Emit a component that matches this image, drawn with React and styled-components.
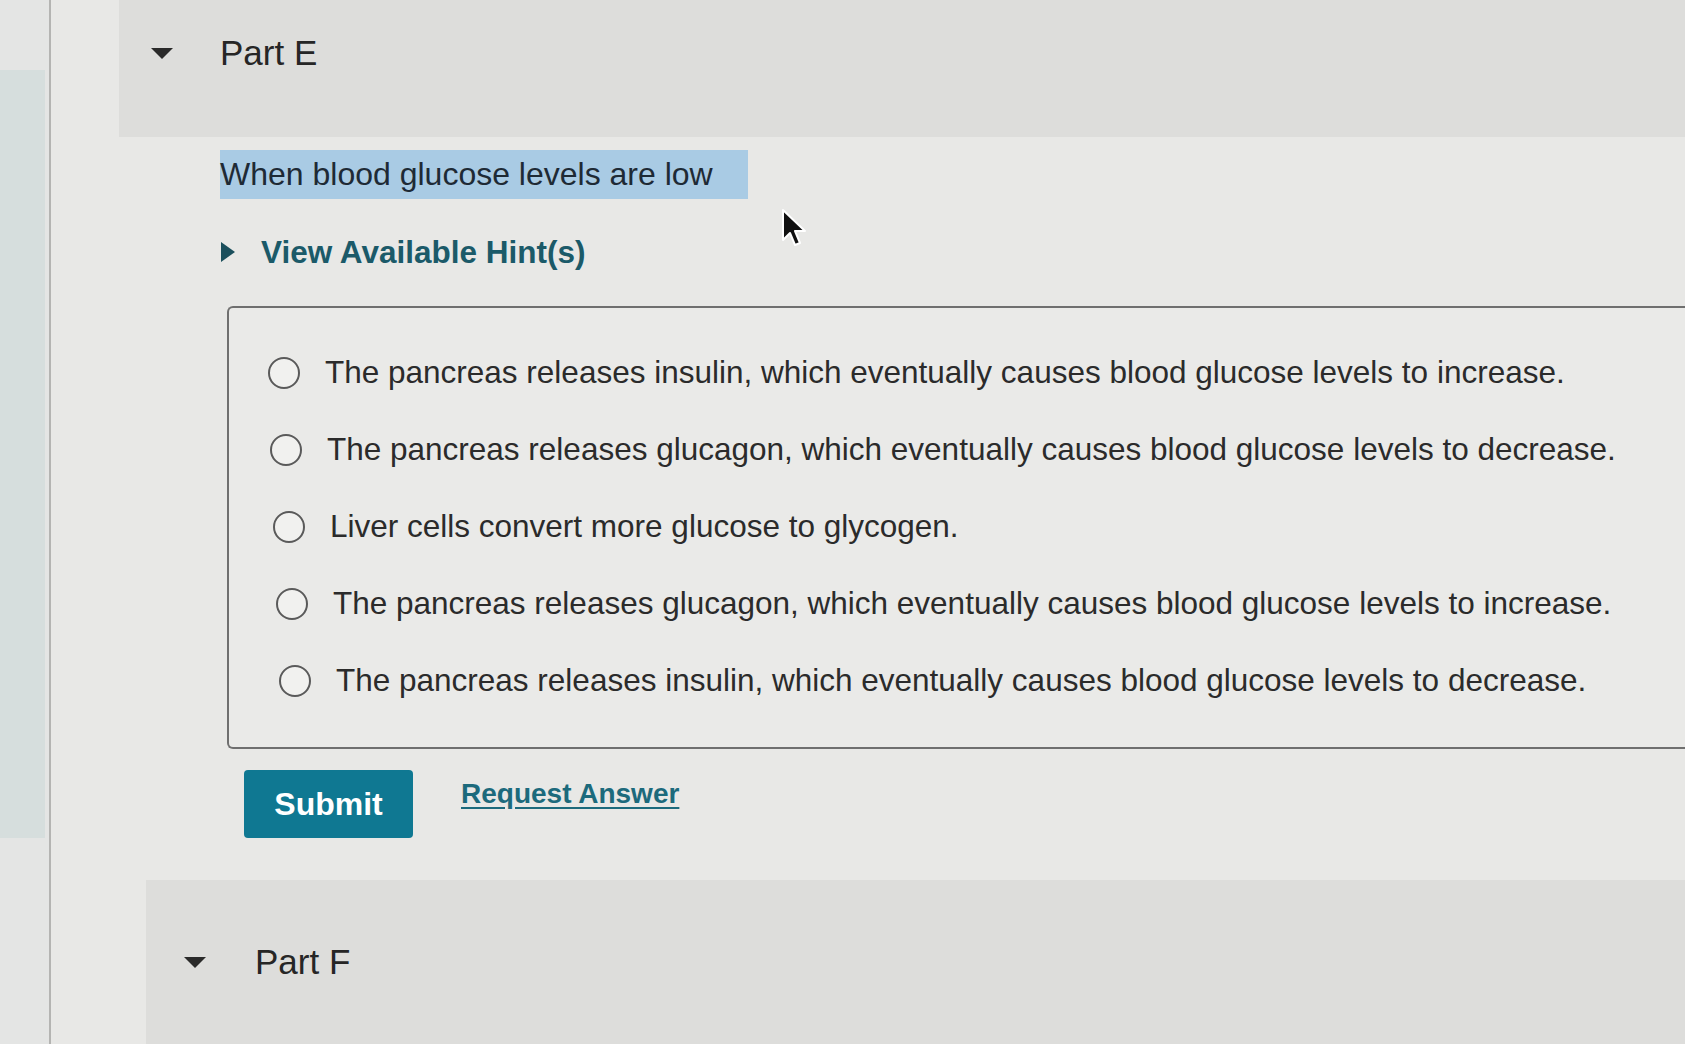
import React from 'react'
import styled, { createGlobalStyle } from 'styled-components'

const GlobalStyle = createGlobalStyle`
  body {
    margin: 0;
    background: #e8e8e6;
    font-family: "Liberation Sans", Arial, Helvetica, sans-serif;
    overflow: hidden;
  }
`

const Page = styled.div`
  display: flex;
  width: 1685px;
  height: 1044px;
  overflow: hidden;
`

const Rail = styled.div`
  width: 49px;
  flex-shrink: 0;
  padding-top: 70px;
  border-right: 2px solid #b4b4b2;
  background: #e4e5e4;
`

const RailStrip = styled.div`
  width: 45px;
  height: 768px;
  background: #d6dedd;
`

const Main = styled.main`
  flex: 1;
  display: flex;
  flex-direction: column;
  min-width: 0;
`

const PartHeader = styled.div`
  display: flex;
  align-items: flex-start;
  gap: ${p => p.$gap}px;
  margin-left: ${p => p.$indent}px;
  margin-top: ${p => p.$offset || 0}px;
  padding-left: ${p => p.$pad}px;
  padding-top: ${p => p.$top}px;
  box-sizing: border-box;
  height: ${p => p.$height ? `${p.$height}px` : 'auto'};
  background: #dddddb;
  color: #262626;
  font-size: 35px;
  ${p => p.$fill && 'flex: 1;'}
`

const Caret = styled.span`
  width: 0;
  height: 0;
  margin-top: ${p => p.$top}px;
  border-left: 11px solid transparent;
  border-right: 11px solid transparent;
  border-top: 11px solid #2a2a2a;
`

const PartBody = styled.div`
  display: flex;
  flex-direction: column;
  align-items: flex-start;
  padding-left: 169px;
`

const Question = styled.div`
  margin-top: 13px;
  padding-right: 35px;
  height: 49px;
  line-height: 49px;
  font-size: 32px;
  color: #1e2a35;
  background: #a9cbe4;
`

const HintToggle = styled.div`
  display: flex;
  align-items: center;
  gap: 26px;
  margin-top: 35px;
  margin-left: 1px;
  height: 36px;
  font-size: 31.5px;
  font-weight: 700;
  color: #1b5a69;
`

const HintCaret = styled.span`
  width: 0;
  height: 0;
  border-top: 10px solid transparent;
  border-bottom: 10px solid transparent;
  border-left: 14px solid #1b4f5c;
`

const Choices = styled.div`
  margin-top: 36px;
  margin-left: 7px;
  align-self: stretch;
  box-sizing: border-box;
  height: 443px;
  padding: 26px 0 0 39px;
  border: 2px solid #6f6f6f;
  border-right: none;
  border-radius: 6px 0 0 6px;
  background: #eaeae8;
  display: flex;
  flex-direction: column;
`

const Choice = styled.label`
  display: flex;
  align-items: center;
  gap: 25px;
  height: 77px;
  margin-left: ${p => p.$shift}px;
  font-size: 31.5px;
  color: #2b2b2b;
  white-space: nowrap;
`

const Radio = styled.span`
  width: 28px;
  height: 28px;
  flex-shrink: 0;
  border: 2.5px solid #5a5a5a;
  border-radius: 50%;
  background: #f1f1ef;
`

const Actions = styled.div`
  display: flex;
  align-items: center;
  gap: 48px;
  margin-top: 21px;
  margin-left: 24px;
`

const SubmitButton = styled.button`
  width: 169px;
  height: 68px;
  border: none;
  border-radius: 4px;
  background: #0f7892;
  color: #ffffff;
  font-family: inherit;
  font-size: 32px;
  font-weight: 700;
`

const RequestLink = styled.a`
  margin-top: -20px;
  font-size: 28px;
  font-weight: 700;
  color: #1c6a7c;
  text-decoration: underline;
  text-underline-offset: 4px;
`

const Cursor = styled.svg`
  position: absolute;
  left: 781px;
  top: 208px;
`

const choices = [
  { text: 'The pancreas releases insulin, which eventually causes blood glucose levels to increase.', shift: 0 },
  { text: 'The pancreas releases glucagon, which eventually causes blood glucose levels to decrease.', shift: 2 },
  { text: 'Liver cells convert more glucose to glycogen.', shift: 5 },
  { text: 'The pancreas releases glucagon, which eventually causes blood glucose levels to increase.', shift: 8 },
  { text: 'The pancreas releases insulin, which eventually causes blood glucose levels to decrease.', shift: 11 },
]

const App = () => {
  return (
    <>
      <GlobalStyle />
      <Page>
        <Rail>
          <RailStrip />
        </Rail>
        <Main>
          <PartHeader $indent={68} $pad={32} $gap={47} $height={137} $top={33}>
            <Caret $top={15} />
            <span>Part E</span>
          </PartHeader>
          <PartBody>
            <Question>When blood glucose levels are low</Question>
            <HintToggle>
              <HintCaret />
              <span>View Available Hint(s)</span>
            </HintToggle>
            <Choices>
              {choices.map((c, i) => (
                <Choice key={i} $shift={c.shift}>
                  <Radio />
                  <span>{c.text}</span>
                </Choice>
              ))}
            </Choices>
            <Actions>
              <SubmitButton>Submit</SubmitButton>
              <RequestLink href="#">Request Answer</RequestLink>
            </Actions>
          </PartBody>
          <PartHeader $indent={95} $pad={38} $gap={49} $fill $top={62} $offset={42}>
            <Caret $top={15} />
            <span>Part F</span>
          </PartHeader>
        </Main>
      </Page>
      <Cursor width="28" height="42" viewBox="0 0 28 42">
        <path d="M2 2 L2 32 L9 25 L14 37 L19 35 L14 23 L24 23 Z" fill="#111" stroke="#fff" strokeWidth="2" strokeLinejoin="round" />
      </Cursor>
    </>
  )
}

export default App
